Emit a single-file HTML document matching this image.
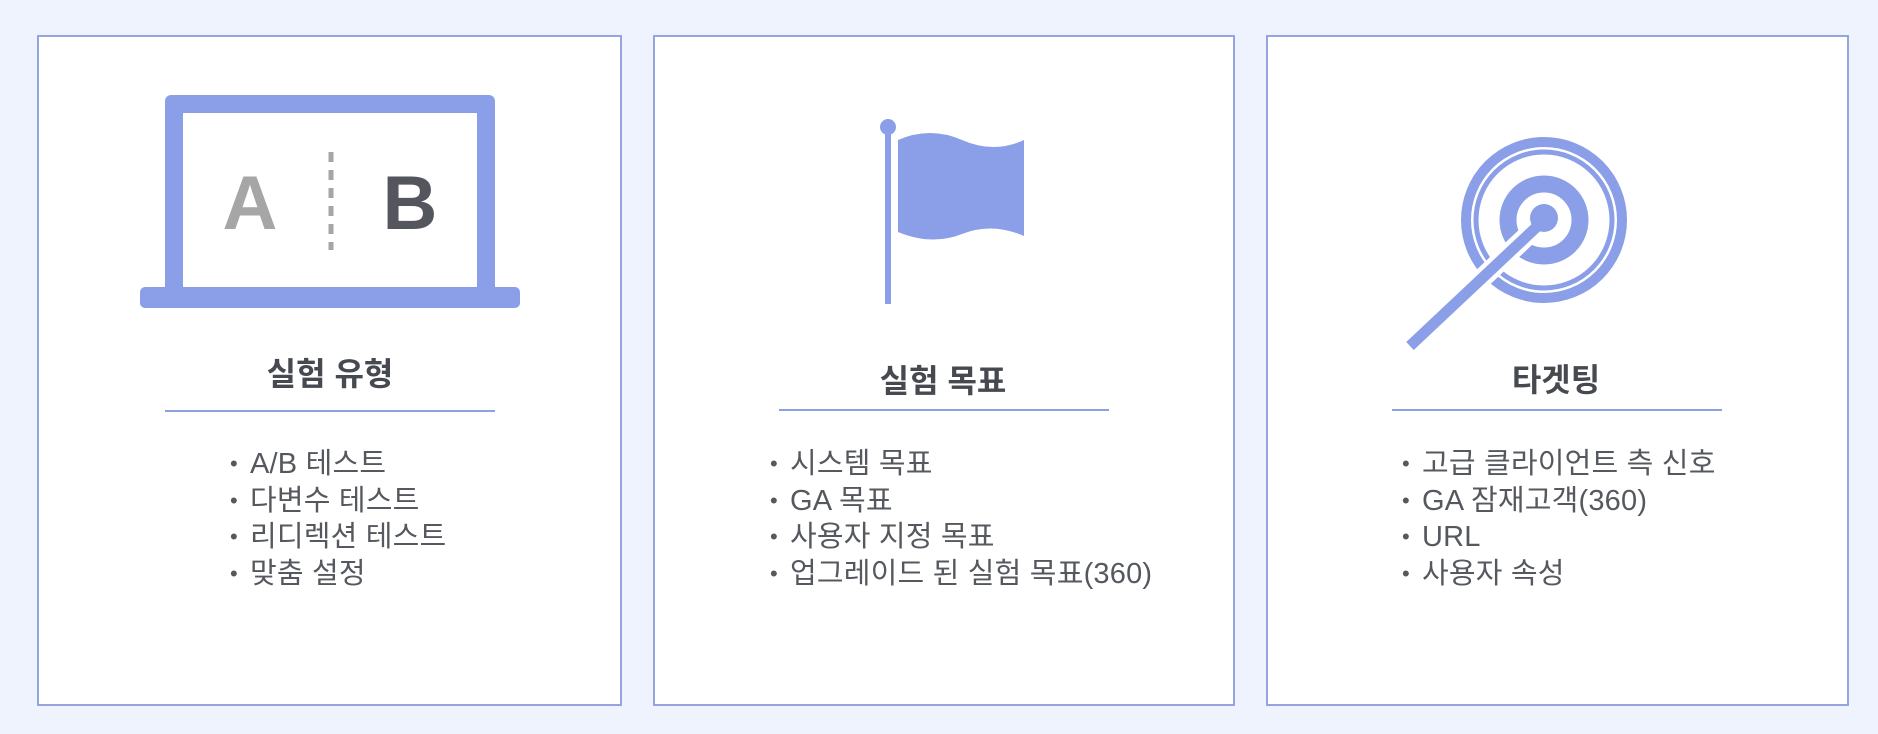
<!DOCTYPE html>
<html><head><meta charset="utf-8"><style>
body{margin:0;width:1878px;height:734px;background:#eef3fd;position:relative;overflow:hidden;font-family:"Liberation Sans","Noto Sans CJK KR",sans-serif}
.p{position:absolute;top:35px;height:671px;background:#fff;border:2px solid #95a4e0;box-sizing:border-box}
.t{position:absolute;font-weight:bold;font-size:32px;color:#464a50;text-align:center;width:400px;line-height:40px}
.l{position:absolute;height:2px;background:#8ea0e0}
ul{position:absolute;margin:0;padding:0;list-style:none;font-size:29px;line-height:36.5px;color:#55585e;letter-spacing:0.2px}
li:before{content:"•";display:inline-block;width:20px;font-size:22px;vertical-align:top}
</style></head><body>
<div class="p" style="left:37px;width:585px"></div>
<div class="p" style="left:653px;width:582px"></div>
<div class="p" style="left:1266px;width:583px"></div>
<svg width="1878" height="734" style="position:absolute;left:0;top:0">
<rect x="165" y="95" width="330" height="200" rx="6" fill="#8b9fe8"/>
<rect x="183" y="113" width="294" height="175" fill="#fff"/>
<rect x="140" y="287" width="380" height="21" rx="5" fill="#8b9fe8"/>
<text x="250" y="229" font-family="Liberation Sans" font-weight="bold" font-size="76" fill="#a6a6a6" text-anchor="middle">A</text>
<text x="410" y="229" font-family="Liberation Sans" font-weight="bold" font-size="76" fill="#53565c" text-anchor="middle">B</text>
<line x1="331" y1="152" x2="331" y2="250" stroke="#a6a6a6" stroke-width="5" stroke-dasharray="10,8"/>
<line x1="888" y1="128" x2="888" y2="304" stroke="#8b9fe8" stroke-width="6"/>
<circle cx="888" cy="127" r="8" fill="#8b9fe8"/>
<path d="M898 140 Q930 126 962 140 T1024 140 L1024 236 Q992 222 962 234 T898 232 Z" fill="#8b9fe8"/>
<circle cx="1544" cy="220" r="78" fill="none" stroke="#8b9fe8" stroke-width="10"/>
<circle cx="1544" cy="220" r="68" fill="none" stroke="#8b9fe8" stroke-width="5"/>
<circle cx="1544" cy="220" r="36" fill="none" stroke="#8b9fe8" stroke-width="17"/>
<line x1="1410" y1="346" x2="1544" y2="220" stroke="#fff" stroke-width="20"/>
<line x1="1410" y1="346" x2="1544" y2="220" stroke="#8b9fe8" stroke-width="11"/>
<circle cx="1544" cy="218" r="14" fill="#8b9fe8"/>
</svg>
<div class="t" style="left:130px;top:354px">실험 유형</div>
<div class="l" style="left:165px;width:330px;top:410px"></div>
<ul style="left:230px;top:446px"><li>A/B 테스트</li><li>다변수 테스트</li><li>리디렉션 테스트</li><li>맞춤 설정</li></ul>
<div class="t" style="left:743px;top:361px">실험 목표</div>
<div class="l" style="left:779px;width:330px;top:409px"></div>
<ul style="left:770px;top:446px"><li>시스템 목표</li><li>GA 목표</li><li>사용자 지정 목표</li><li>업그레이드 된 실험 목표(360)</li></ul>
<div class="t" style="left:1356px;top:360px">타겟팅</div>
<div class="l" style="left:1392px;width:330px;top:409px"></div>
<ul style="left:1402px;top:446px"><li>고급 클라이언트 측 신호</li><li>GA 잠재고객(360)</li><li>URL</li><li>사용자 속성</li></ul>
</body></html>
